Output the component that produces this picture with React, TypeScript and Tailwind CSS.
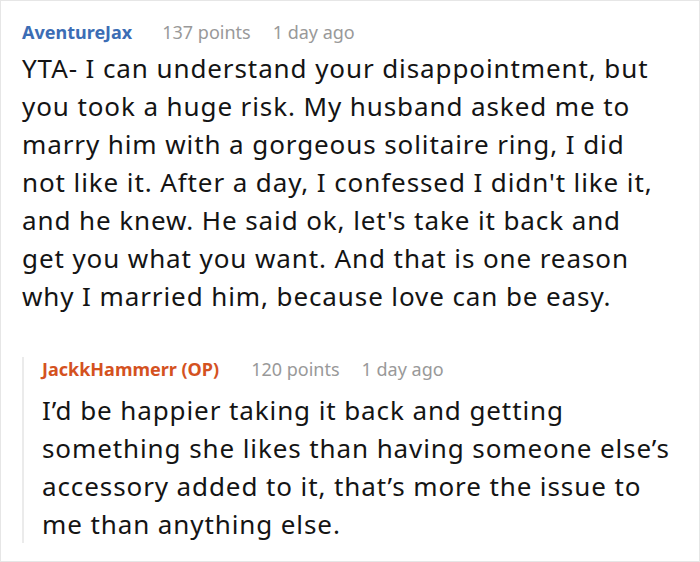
import React from 'react';

// Comment thread with one reply
const Header: React.FC<{ name: string; color: string; points: string; time: string; gap: string }> = ({ name, color, points, time, gap }) => (
    <div className="flex items-center text-[18px] leading-[24px]">
        <span className={`font-bold ${color}`}>{name}</span>
        <span className={`${gap} text-[#999999]`}>{points}</span>
        <span className="ml-[22px] text-[#999999]">{time}</span>
    </div>
);

const Lines: React.FC<{ lines: string[] }> = ({ lines }) => (
    <p className="text-[26px] leading-[38px] tracking-[0.9px] text-[#141414] whitespace-nowrap">
        {lines.map((l, i) => (
            <span key={i} className="block">{l}</span>
        ))}
    </p>
);

const App: React.FC = () => {
    return (
        <div
            className="w-[700px] h-[562px] bg-white border border-[#e6e6e6] overflow-hidden"
            style={{ fontFamily: '"Noto Sans", "Open Sans", sans-serif' }}
        >
            <div className="pl-[21px] pt-[19px] pr-[20px]">
                <Header name="AventureJax" color="text-[#3c6db5]" points="137 points" time="1 day ago" gap="ml-[30px]" />
                <div className="mt-[5px]">
                    <Lines
                        lines={[
                            'YTA- I can understand your disappointment, but',
                            'you took a huge risk. My husband asked me to',
                            'marry him with a gorgeous solitaire ring, I did',
                            "not like it. After a day, I confessed I didn't like it,",
                            "and he knew. He said ok, let's take it back and",
                            'get you what you want. And that is one reason',
                            'why I married him, because love can be easy.',
                        ]}
                    />
                </div>

                {/* Reply */}
                <div className="mt-[44px] border-l-2 border-[#ebebeb] pl-[18px] h-[186px]">
                    <div className="-mt-[2px]">
                        <Header name="JackkHammerr (OP)" color="text-[#d4521f]" points="120 points" time="1 day ago" gap="ml-[32px]" />
                    </div>
                    <div className="mt-[10px]">
                        <Lines
                            lines={[
                                'I’d be happier taking it back and getting',
                                'something she likes than having someone else’s',
                                'accessory added to it, that’s more the issue to',
                                'me than anything else.',
                            ]}
                        />
                    </div>
                </div>
            </div>
        </div>
    );
};

export default App;
